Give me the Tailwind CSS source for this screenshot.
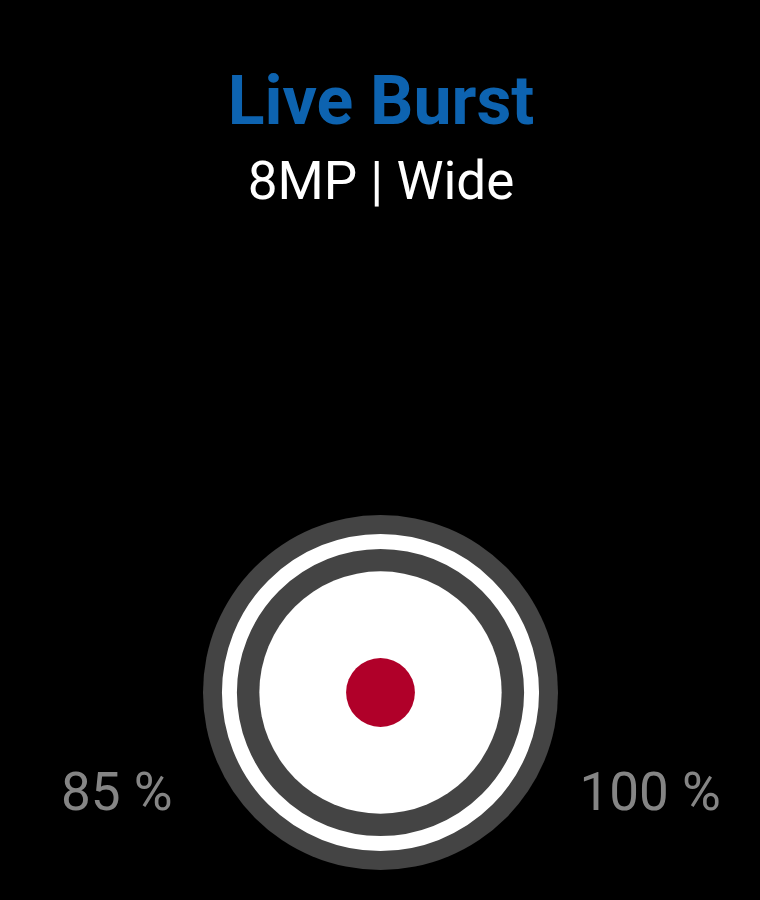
<!DOCTYPE html>
<html lang="en">
<head>
    <meta charset="UTF-8">
    <meta name="viewport" content="width=device-width, initial-scale=1.0">
    <title>Live Burst</title>
    <script src="https://cdn.jsdelivr.net/npm/@tailwindcss/browser@4"></script>
</head>
<body class="bg-black font-[Roboto,sans-serif]">
    <main class="min-h-screen flex flex-col justify-between pt-[61px] pb-[30px]">
        <!-- Capture mode -->
        <header class="pl-[2px] text-center">
            <h1 class="text-[68px] leading-[80px] font-bold text-[#0d63b0]">Live Burst</h1>
            <p class="text-[53px] leading-[80px] text-white">8MP | Wide</p>
        </header>

        <!-- Shutter and levels -->
        <div class="grid grid-cols-[1fr_auto_1fr] items-end">
            <span class="pr-[30px] pb-10 text-right text-[53px] leading-[76px] text-[#858585]">85 %</span>
            <button type="button" aria-label="Shutter" class="rounded-full">
                <svg class="block size-[355px]" viewBox="0 0 356 356" aria-hidden="true">
                    <circle cx="178" cy="178" r="178" fill="#444"/>
                    <circle cx="178" cy="178" r="151.5" fill="none" stroke="#fff" stroke-width="15"/>
                    <circle cx="178" cy="178" r="121.5" fill="#fff"/>
                    <circle cx="178" cy="178" r="34.5" fill="#b00029"/>
                </svg>
            </button>
            <span class="pl-[22px] pb-10 text-left text-[53px] leading-[76px] text-[#858585]">100 %</span>
        </div>
    </main>
</body>
</html>
